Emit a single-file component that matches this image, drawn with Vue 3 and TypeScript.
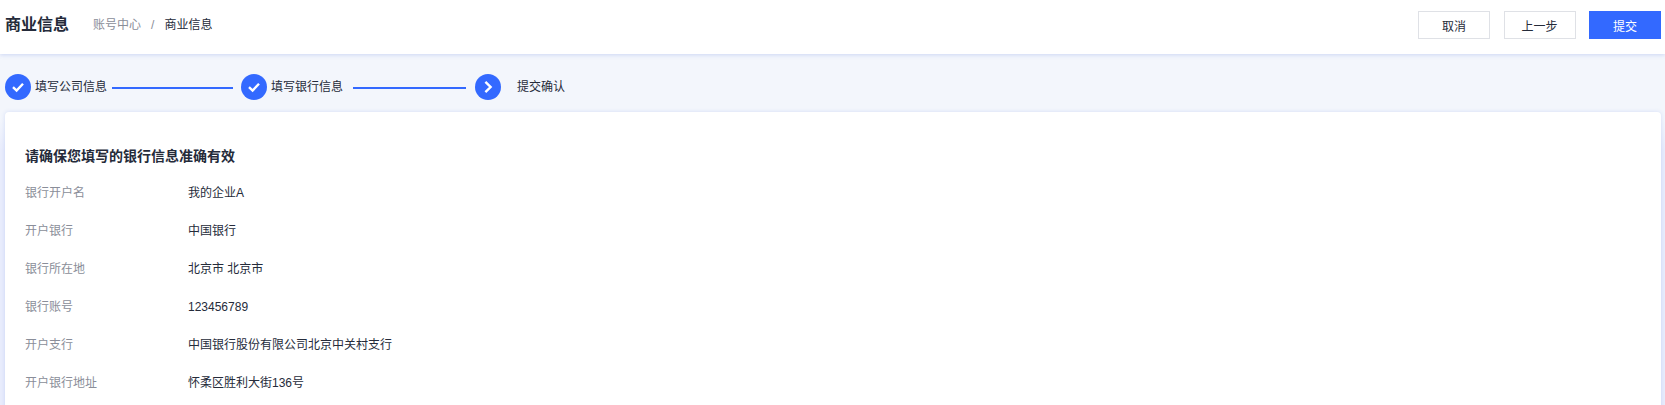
<template>
  <div class="page">
    <header class="top-bar">
      <div class="title-group">
        <h1 class="page-title">商业信息</h1>
        <nav class="crumbs">
          <span class="crumb-link">账号中心</span>
          <span class="crumb-sep">/</span>
          <span class="crumb-current">商业信息</span>
        </nav>
      </div>
      <div class="actions">
        <button class="btn">取消</button>
        <button class="btn">上一步</button>
        <button class="btn primary">提交</button>
      </div>
    </header>

    <div class="steps">
      <div v-for="step in steps" :key="step.label" class="step" :class="step.cls">
        <span class="step-icon">
          <svg v-if="step.done" width="14" height="14" viewBox="0 0 14 14" fill="none">
            <path d="M2 7.2 5.6 10.6 12 3.8" stroke="#fff" stroke-width="2.4" />
          </svg>
          <svg v-else width="14" height="14" viewBox="0 0 14 14" fill="none">
            <path d="M4.4 1.8 9.6 7 4.4 12.2" stroke="#fff" stroke-width="2.4" />
          </svg>
        </span>
        <span class="step-label">{{ step.label }}</span>
        <span v-if="step.done" class="step-line"></span>
      </div>
    </div>

    <section class="card">
      <h2 class="card-title">请确保您填写的银行信息准确有效</h2>
      <div v-for="row in rows" :key="row.label" class="info-row">
        <span class="info-label">{{ row.label }}</span>
        <span class="info-value">{{ row.value }}</span>
      </div>
    </section>
  </div>
</template>

<script setup lang="ts">
const steps = [
  { label: '填写公司信息', done: true, cls: 'step-one' },
  { label: '填写银行信息', done: true, cls: 'step-two' },
  { label: '提交确认', done: false, cls: 'step-three' }
]

const rows = [
  { label: '银行开户名', value: '我的企业A' },
  { label: '开户银行', value: '中国银行' },
  { label: '银行所在地', value: '北京市 北京市' },
  { label: '银行账号', value: '123456789' },
  { label: '开户支行', value: '中国银行股份有限公司北京中关村支行' },
  { label: '开户银行地址', value: '怀柔区胜利大街136号' }
]
</script>

<style>
html,
body {
  margin: 0;
  height: 100%;
  overflow: hidden;
}
</style>

<style scoped>
.page {
  height: 405px;
  overflow: hidden;
  background: linear-gradient(180deg, #f3f6fc 0, #f3f6fc 118px, #e8ecfc 150px, #e8ecfc 100%);
  font-family: "Liberation Sans", "Noto Sans CJK SC", sans-serif;
  font-size: 12px;
  color: #252b3a;
}

.top-bar {
  height: 54px;
  box-sizing: border-box;
  padding: 11px 4px 0 5px;
  display: flex;
  justify-content: space-between;
  background: #fff;
  box-shadow: 0 1px 4px rgba(94, 124, 224, 0.25);
}

.title-group {
  display: flex;
  align-items: center;
  height: 24px;
}

.page-title {
  margin: 0 24px 0 0;
  font-size: 16px;
  font-weight: 700;
}

.crumbs {
  display: flex;
  align-items: baseline;
  gap: 10px;
  color: #252b3a;
}

.crumb-link,
.crumb-sep {
  color: #8a8e99;
}

.actions {
  display: flex;
  gap: 13.5px;
}

.btn {
  width: 72px;
  height: 28px;
  padding: 0;
  border: 1px solid #dfe1e6;
  background: #fff;
  color: #252b3a;
  font: inherit;
}

.btn.primary {
  background: #3369ff;
  border-color: #3369ff;
  color: #fff;
}

.steps {
  display: flex;
  padding: 20px 0 0 5px;
  height: 38px;
}

.step {
  display: flex;
  align-items: center;
  height: 26px;
}

.step-icon {
  width: 26px;
  height: 26px;
  border-radius: 50%;
  background: #3369ff;
  display: flex;
  align-items: center;
  justify-content: center;
}

.step-label {
  margin-left: 4px;
  position: relative;
  top: -2px;
}

.step-line {
  height: 2px;
  margin-top: 2px;
  background: #3369ff;
}

.step-one .step-line {
  width: 121px;
  margin: 2px 8px 0 5px;
}

.step-two .step-line {
  width: 113px;
  margin: 2px 9px 0 10px;
}

.step-three .step-label {
  margin-left: 16px;
}

.card {
  margin: 0 4px 0 5px;
  height: 300px;
  box-sizing: border-box;
  padding: 34px 20px 0;
  background: #fff;
  border-radius: 4px;
  box-shadow: 0 0 4px rgba(94, 124, 224, 0.2);
}

.card-title {
  margin: 0 0 18px;
  font-size: 14px;
  line-height: 20px;
  font-weight: 700;
}

.info-row {
  display: flex;
  height: 38px;
  line-height: 18px;
}

.info-label {
  width: 163px;
  color: #8a8e99;
}
</style>
